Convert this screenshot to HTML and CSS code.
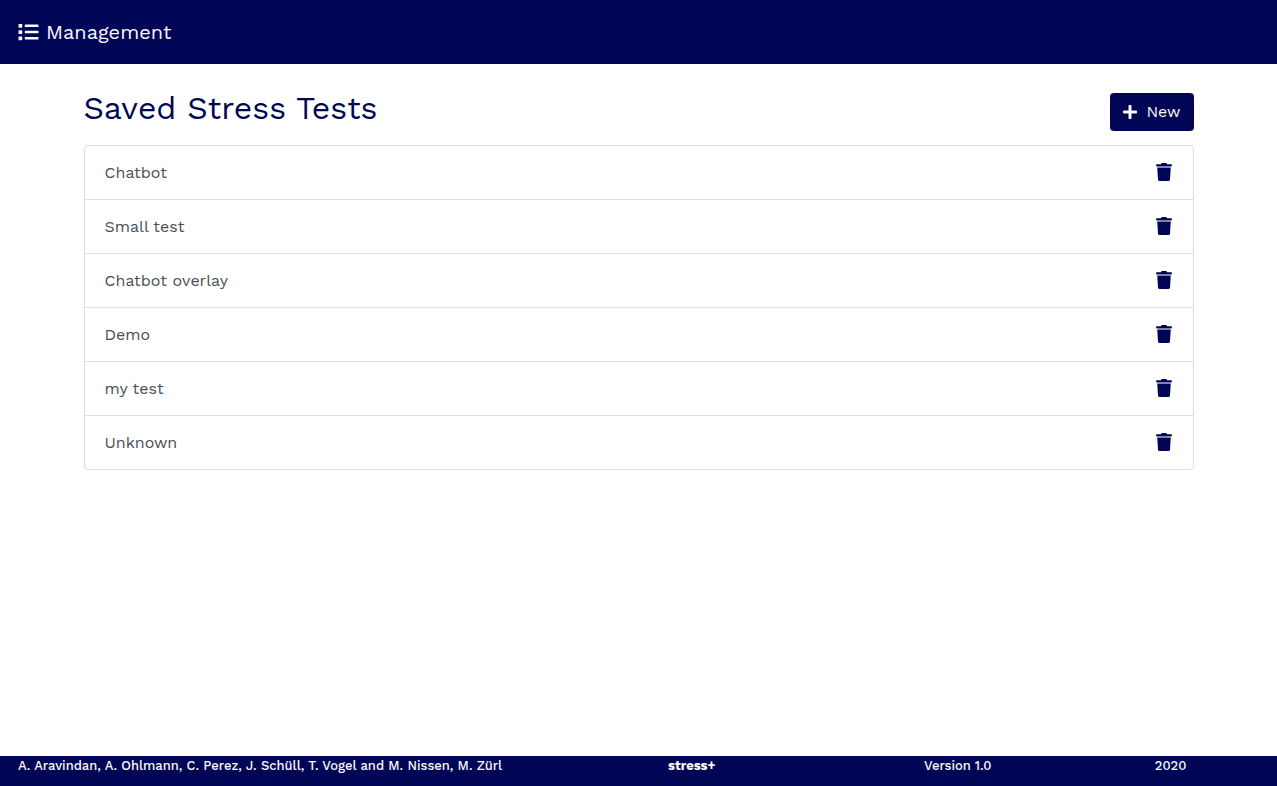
FILE: index.html
```
<!DOCTYPE html>
<html lang="en">
<head>
<meta charset="utf-8">
<meta name="viewport" content="width=device-width, initial-scale=1">
<title>Management</title>
<link rel="stylesheet" href="styles.css">
</head>
<body>
<svg class="sprite" aria-hidden="true">
  <symbol id="trash" viewBox="0 0 448 512"><path d="M432 32H312l-9.4-18.7A24 24 0 0 0 281.100 0H166.800a23.720 23.720 0 0 0-21.400 13.300L136 32H16A16 16 0 0 0 0 48v32a16 16 0 0 0 16 16h416a16 16 0 0 0 16-16V48a16 16 0 0 0-16-16zM53.200 467a48 48 0 0 0 47.900 45h245.800a48 48 0 0 0 47.900-45L416 128H32z"/></symbol>
</svg>
<header class="navbar">
  <a class="brand" href="#">
    <svg class="brand-icon" viewBox="0 0 512 512" aria-hidden="true"><path d="M16 48h64a16 16 0 0 1 16 16v64a16 16 0 0 1-16 16H16a16 16 0 0 1-16-16V64a16 16 0 0 1 16-16zM16 208h64a16 16 0 0 1 16 16v64a16 16 0 0 1-16 16H16a16 16 0 0 1-16-16v-64a16 16 0 0 1 16-16zM16 368h64a16 16 0 0 1 16 16v64a16 16 0 0 1-16 16H16a16 16 0 0 1-16-16v-64a16 16 0 0 1 16-16zM176 64h320a16 16 0 0 1 16 16v32a16 16 0 0 1-16 16H176a16 16 0 0 1-16-16V80a16 16 0 0 1 16-16zM176 224h320a16 16 0 0 1 16 16v32a16 16 0 0 1-16 16H176a16 16 0 0 1-16-16v-32a16 16 0 0 1 16-16zM176 384h320a16 16 0 0 1 16 16v32a16 16 0 0 1-16 16H176a16 16 0 0 1-16-16v-32a16 16 0 0 1 16-16z"/></svg>
    <span>Management</span>
  </a>
</header>
<main class="container">
  <div class="heading">
    <h1 class="title">Saved Stress Tests</h1>
    <button class="new-button" type="button">
      <svg class="plus-icon" viewBox="0 0 448 512" aria-hidden="true"><path d="M416 208H272V64c0-17.670-14.330-32-32-32h-32c-17.670 0-32 14.330-32 32v144H32c-17.670 0-32 14.330-32 32v32c0 17.670 14.330 32 32 32h144v144c0 17.670 14.330 32 32 32h32c17.670 0 32-14.330 32-32V304h144c17.670 0 32-14.330 32-32v-32c0-17.670-14.330-32-32-32z"/></svg>
      <span>New</span>
    </button>
  </div>
  <ul class="tests">
    <li class="test"><a class="test-link" href="#">Chatbot</a><button class="delete" type="button" aria-label="Delete Chatbot"><svg class="trash-icon"><use href="#trash"/></svg></button></li>
    <li class="test"><a class="test-link" href="#">Small test</a><button class="delete" type="button" aria-label="Delete Small test"><svg class="trash-icon"><use href="#trash"/></svg></button></li>
    <li class="test"><a class="test-link" href="#">Chatbot overlay</a><button class="delete" type="button" aria-label="Delete Chatbot overlay"><svg class="trash-icon"><use href="#trash"/></svg></button></li>
    <li class="test"><a class="test-link" href="#">Demo</a><button class="delete" type="button" aria-label="Delete Demo"><svg class="trash-icon"><use href="#trash"/></svg></button></li>
    <li class="test"><a class="test-link" href="#">my test</a><button class="delete" type="button" aria-label="Delete my test"><svg class="trash-icon"><use href="#trash"/></svg></button></li>
    <li class="test"><a class="test-link" href="#">Unknown</a><button class="delete" type="button" aria-label="Delete Unknown"><svg class="trash-icon"><use href="#trash"/></svg></button></li>
  </ul>
</main>
<footer class="footer">
  <span class="authors">A. Aravindan, A. Ohlmann, C. Perez, J. Schüll, T. Vogel and M. Nissen, M. Zürl</span>
  <strong class="product">stress+</strong>
  <span>Version 1.0</span>
  <span>2020</span>
</footer>
</body>
</html>
```
FILE: styles.css
```
* {
  box-sizing: border-box;
}

body {
  display: flex;
  flex-direction: column;
  min-height: 100vh;
  margin: 0;
  background: #fff;
  color: #495057;
  font-family: "Work Sans", Inter, sans-serif;
  font-size: 16px;
  line-height: 24px;
}

.sprite {
  position: absolute;
  width: 0;
  height: 0;
}

svg {
  display: block;
  fill: currentColor;
}

.navbar {
  display: flex;
  align-items: center;
  padding: 16px 18px;
  background: #000555;
}

.brand {
  display: flex;
  align-items: center;
  gap: 7px;
  color: #f8f9fa;
  font-size: 20px;
  line-height: 32px;
  text-decoration: none;
}

.brand-icon {
  width: 21px;
  height: 20px;
}

.container {
  flex: 1;
  width: 100%;
  max-width: 1140px;
  margin: 0 auto;
  padding: 24px 15px;
}

.heading {
  display: flex;
  align-items: flex-start;
  justify-content: space-between;
  margin-bottom: 14px;
}

.title {
  margin: 0;
  color: #000555;
  font-size: 32px;
  font-weight: 400;
  line-height: 40px;
}

.new-button {
  display: flex;
  align-items: center;
  gap: 9px;
  margin-top: 5px;
  padding: 7px 13px;
  border: 0;
  border-radius: 4px;
  background: #000555;
  color: #f8f9fa;
  font: inherit;
}

.plus-icon {
  width: 14px;
  height: 16px;
}

.tests {
  margin: 0;
  padding: 0;
  border: 1px solid #dfdfdf;
  border-radius: 4px;
  list-style: none;
}

.test {
  display: flex;
  align-items: flex-start;
  justify-content: space-between;
  padding: 15px 20px 14px;
}

.test + .test {
  border-top: 1px solid #dfdfdf;
}

.test-link {
  color: #495057;
  text-decoration: none;
}

.delete {
  padding: 2px 0;
  border: 0;
  background: none;
  color: #000555;
}

.trash-icon {
  width: 18px;
  height: 18px;
}

.footer {
  display: grid;
  grid-template-columns: 5fr 3fr 2fr 2fr;
  height: 30px;
  background: #000555;
  color: #f8f9fa;
  font-size: 13px;
  font-weight: 500;
  line-height: 20px;
  text-align: center;
}

.authors {
  padding-left: 18px;
  text-align: left;
  white-space: nowrap;
}

.product {
  font-weight: 700;
}
```
